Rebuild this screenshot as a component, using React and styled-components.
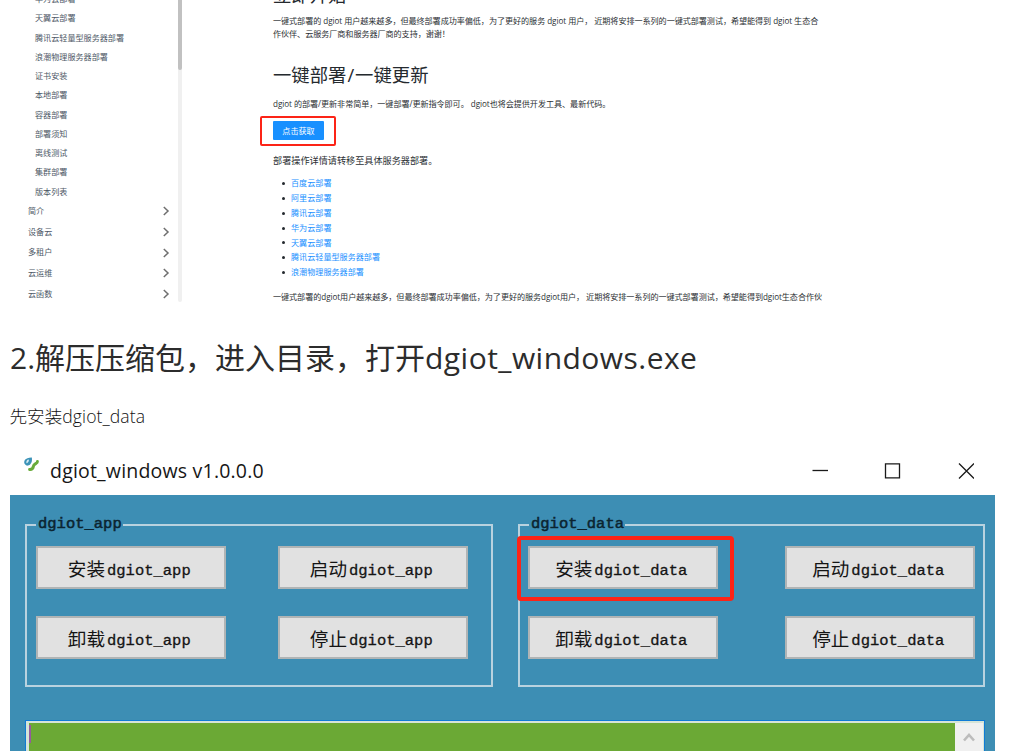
import React from "react";
import styled, { createGlobalStyle } from "styled-components";

const Global = createGlobalStyle`
  *, *::before, *::after { box-sizing: border-box; }
  html, body { margin: 0; padding: 0; background: #fff; overflow: hidden; }
  body { font-family: "Open Sans", "Noto Sans CJK SC", sans-serif; color: #2c2c2c; }
  h1, h2, p, ul { margin: 0; padding: 0; font-weight: 400; }
`;

const Page = styled.main`
  width: 1027px;
  height: 751px;
  overflow: hidden;
`;

const DocShot = styled.section`
  display: flex;
  height: 302px;
  overflow: hidden;
`;

const Sidebar = styled.nav`
  width: 178px;
  margin-top: -10.8px;
  color: #4d5866;
  font-size: 8.1px;
  white-space: nowrap;
`;

const SubItem = styled.div`
  height: 19.25px;
  line-height: 19.25px;
  padding-left: 35px;
`;

const GroupItem = styled.div`
  display: flex;
  align-items: center;
  justify-content: space-between;
  height: 20.65px;
  line-height: 20.65px;
  padding: 0 8px 0 28px;
`;

const Track = styled.div`
  width: 4px;
  height: 302px;
  background: #f0f0f0;
  border-radius: 0 0 2px 2px;
`;

const Thumb = styled.div`
  height: 70px;
  background: #c1c1c1;
  border-radius: 0 0 2px 2px;
`;

const Article = styled.article`
  margin-left: 91px;
  white-space: nowrap;
  color: #2b2f33;
`;

const DocHeading = styled.h2`
  margin-top: ${(p) => p.$top}px;
  font-size: 18.35px;
  line-height: 26px;
  color: #24292e;
`;

const Slash = styled.span`
  margin: 0 1px;
`;

const Para = styled.p`
  margin-top: ${(p) => p.$top}px;
  font-size: ${(p) => p.$size || 8.1}px;
  line-height: 13px;
  letter-spacing: ${(p) => p.$ls || 0}px;
`;

const Latin = styled.span`
  letter-spacing: ${(p) => p.$ls}px;
`;

const GetButton = styled.button`
  position: relative;
  display: block;
  width: 51px;
  height: 19px;
  margin-top: 11.5px;
  padding: 0;
  border: 0;
  border-radius: 1px;
  background: #1890ff;
  color: #fff;
  font: 8.1px/18px "Open Sans", "Noto Sans CJK SC", sans-serif;
  &::after {
    content: "";
    position: absolute;
    left: -13px;
    top: -5px;
    width: 76px;
    height: 30px;
    border: 2px solid #fc2417;
    border-radius: 2px;
  }
`;

const LinkList = styled.ul`
  margin-top: 9.2px;
  list-style: none;
  font-size: 8.1px;
`;

const LinkItem = styled.li`
  display: flex;
  align-items: center;
  gap: 6.5px;
  height: 14.9px;
  padding-left: 8.5px;
  line-height: 14.9px;
  color: #1890ff;
  &::before {
    content: "";
    width: 3px;
    height: 3px;
    border-radius: 50%;
    background: #24292e;
  }
`;

const StepTitle = styled.h1`
  margin: 35px 0 0 10px;
  font-size: 30px;
  line-height: 42px;
  color: #2c2c2c;
  white-space: nowrap;
`;

const StepText = styled.p`
  && {
    margin: 24px 0 0 9.5px;
    font-weight: 300;
  }
  font-size: 17.6px;
  line-height: 26px;
  color: #111;
  white-space: nowrap;
`;

const AppWindow = styled.section`
  width: 985px;
  margin: 18px 0 0 10px;
`;

const TitleBar = styled.header`
  display: flex;
  height: 48px;
  padding-left: 12px;
`;

const TitleText = styled.span`
  flex: 1;
  margin-left: 10px;
  font-size: 19.5px;
  line-height: 47px;
  letter-spacing: ${(p) => p.$ls}px;
  color: #161616;
`;

const AppIcon = styled.svg`
  width: 18px;
  height: 18px;
  margin-top: 9px;
`;

const Controls = styled.svg`
  width: 162px;
  height: 16px;
  margin: 16px 21px 0 0;
`;

const Body = styled.div`
  height: 260px;
  padding: 19px 10px 0 15px;
  background: #3d8eb4;
`;

const Groups = styled.div`
  display: flex;
  gap: 25px;
`;

const Group = styled.fieldset`
  width: ${(p) => p.$w}px;
  height: 173px;
  min-width: 0;
  margin: 0;
  padding: 10px 0 0 ${(p) => p.$pad}px;
  border: 2px solid #b9d2df;
  display: grid;
  grid-template-columns: 189.5px 189.5px;
  grid-auto-rows: 43px;
  row-gap: 27px;
  align-content: start;
  column-gap: ${(p) => p.$gap}px;
`;

const Legend = styled.legend`
  height: 22px;
  margin-left: ${(p) => 9 - p.$pad}px;
  padding: 0 1px 0 2px;
  font: 400 15.5px/21px "Liberation Mono", monospace;
  -webkit-text-stroke: 0.5px #0b2430;
  color: #0b2430;
`;

const ToolButton = styled.button`
  position: relative;
  padding: 0 3px 0 0;
  border: 2px solid #b0b4b5;
  background: #e1e1e1;
  color: #141414;
  font: 400 18.6px/35px "Noto Sans CJK SC", sans-serif;
  white-space: nowrap;
`;

const Mono = styled.span`
  position: relative;
  top: -1.5px;
  margin-left: 2px;
  font: 400 15.5px "Liberation Mono", monospace;
  -webkit-text-stroke: 0.3px #141414;
`;

const Marker = styled.span`
  position: absolute;
  left: -13.5px;
  top: -12px;
  width: 217px;
  height: 65px;
  border: 4px solid #fc2417;
  border-radius: 4px;
`;

const Console = styled.div`
  display: flex;
  width: 960px;
  height: 60px;
  margin-top: 33px;
  border: 1px solid #0f7bd6;
  background: #d5e4d8;
  padding: 2px 1px 0 3px;
`;

const ConsoleText = styled.div`
  flex: 1;
  padding: 2px 0 0 0;
  background: #6ba935;
`;

const Caret = styled.div`
  width: 2px;
  height: 18px;
  background: #945b9c;
`;

const ConsoleScroll = styled.div`
  width: 28px;
  background: #f0f0f0;
  display: flex;
  justify-content: center;
  padding-top: 8px;
`;

const subItems = [
  "华为云部署", "天翼云部署", "腾讯云轻量型服务器部署", "浪潮物理服务器部署", "证书安装",
  "本地部署", "容器部署", "部署须知", "离线测试", "集群部署", "版本列表",
];
const groupItems = ["简介", "设备云", "多租户", "云运维", "云函数"];
const links = [
  "百度云部署", "阿里云部署", "腾讯云部署", "华为云部署", "天翼云部署",
  "腾讯云轻量型服务器部署", "浪潮物理服务器部署",
];
const groups = [
  { name: "dgiot_app", width: 468, pad: 9, gap: 52.5 },
  { name: "dgiot_data", width: 467, pad: 8, gap: 67.5, marked: true },
];
const actions = ["安装", "启动", "卸载", "停止"];

const Chevron = () => (
  <svg width="8" height="10" viewBox="0 0 8 10" fill="none" stroke="#6f6f6f" strokeWidth="1.5">
    <path d="M1.8 1 L6 5 L1.8 9" />
  </svg>
);

export default function App() {
  return (
    <Page>
      <Global />
      <DocShot>
        <Sidebar>
          {subItems.map((t) => <SubItem key={t}>{t}</SubItem>)}
          {groupItems.map((t) => <GroupItem key={t}>{t}<Chevron /></GroupItem>)}
        </Sidebar>
        <Track><Thumb /></Track>
        <Article>
          <DocHeading $top={-18}>立即开始</DocHeading>
          <Para $top={5.5} $ls={-0.055}>
            一键式部署的 dgiot 用户越来越多，但最终部署成功率偏低，为了更好的服务 dgiot 用户， 近期将安排一系列的一键式部署测试，希望能得到 dgiot 生态合
            <br />
            作伙伴、云服务厂商和服务器厂商的支持，谢谢！
          </Para>
          <DocHeading $top={22.5}>一键部署<Slash>/</Slash>一键更新</DocHeading>
          <Para $top={8.5} $ls={-0.05}>
            dgiot 的部署/更新非常简单，一键部署/更新指令即可。 dgiot也将会提供开发工具、最新代码。
          </Para>
          <GetButton>点击获取</GetButton>
          <Para $top={13.8} $size={9.15}>部署操作详情请转移至具体服务器部署。</Para>
          <LinkList>
            {links.map((t) => <LinkItem key={t}>{t}</LinkItem>)}
          </LinkList>
          <Para $top={10.1} $ls={-0.055}>
            一键式部署的dgiot用户越来越多，但最终部署成功率偏低，为了更好的服务dgiot用户， 近期将安排一系列的一键式部署测试，希望能得到dgiot生态合作伙
          </Para>
        </Article>
      </DocShot>

      <StepTitle>
        2.解压压缩包，进入目录，打开<Latin $ls={0.46}>dgiot_windows.exe</Latin>
      </StepTitle>
      <StepText>先安装<Latin $ls={0.08}>dgiot_data</Latin></StepText>

      <AppWindow>
        <TitleBar>
          <AppIcon viewBox="0 0 18 18" fill="none">
            <path d="M3.2 8.6 C0.6 5.2 3.4 1.2 9.8 1.4 C10.6 5.4 9 8.8 5.8 9.6 C4.8 9.8 3.8 9.4 3.2 8.6 Z" fill="#3c93b8" />
            <path d="M4.4 7.2 C4 5 5 3.6 6.8 3.4 C7.2 5 6.2 6.8 4.4 7.2 Z" fill="#d8ecf3" />
            <path d="M15.4 5.6 C15.6 7.6 11.8 7.6 11.4 10.2 C11.1 12.4 10 13.6 7.6 13.4" stroke="#69ab3a" strokeWidth="3" strokeLinecap="round" />
          </AppIcon>
          <TitleText $ls={0.2}>dgiot_windows v1.0.0.0</TitleText>
          <Controls viewBox="0 0 162 16" fill="none" stroke="#1a1a1a" strokeWidth="1.3">
            <path d="M0.5 7.5 H16" />
            <path d="M73.5 0.8 H87.5 V14.8 H73.5 Z" />
            <path d="M147 0.5 L162 15.5 M162 0.5 L147 15.5" />
          </Controls>
        </TitleBar>
        <Body>
          <Groups>
            {groups.map((g) => (
              <Group key={g.name} $w={g.width} $pad={g.pad} $gap={g.gap}>
                <Legend $pad={g.pad}>{g.name}</Legend>
                {actions.map((a, i) => (
                  <ToolButton key={a}>
                    {a}<Mono>{g.name}</Mono>
                    {g.marked && i === 0 && <Marker />}
                  </ToolButton>
                ))}
              </Group>
            ))}
          </Groups>
          <Console>
            <ConsoleText><Caret /></ConsoleText>
            <ConsoleScroll>
              <svg width="14" height="12" viewBox="0 0 14 12" fill="none" stroke="#bcbcbc" strokeWidth="2.6">
                <path d="M2 9.5 L7 4 L12 9.5" />
              </svg>
            </ConsoleScroll>
          </Console>
        </Body>
      </AppWindow>
    </Page>
  );
}
